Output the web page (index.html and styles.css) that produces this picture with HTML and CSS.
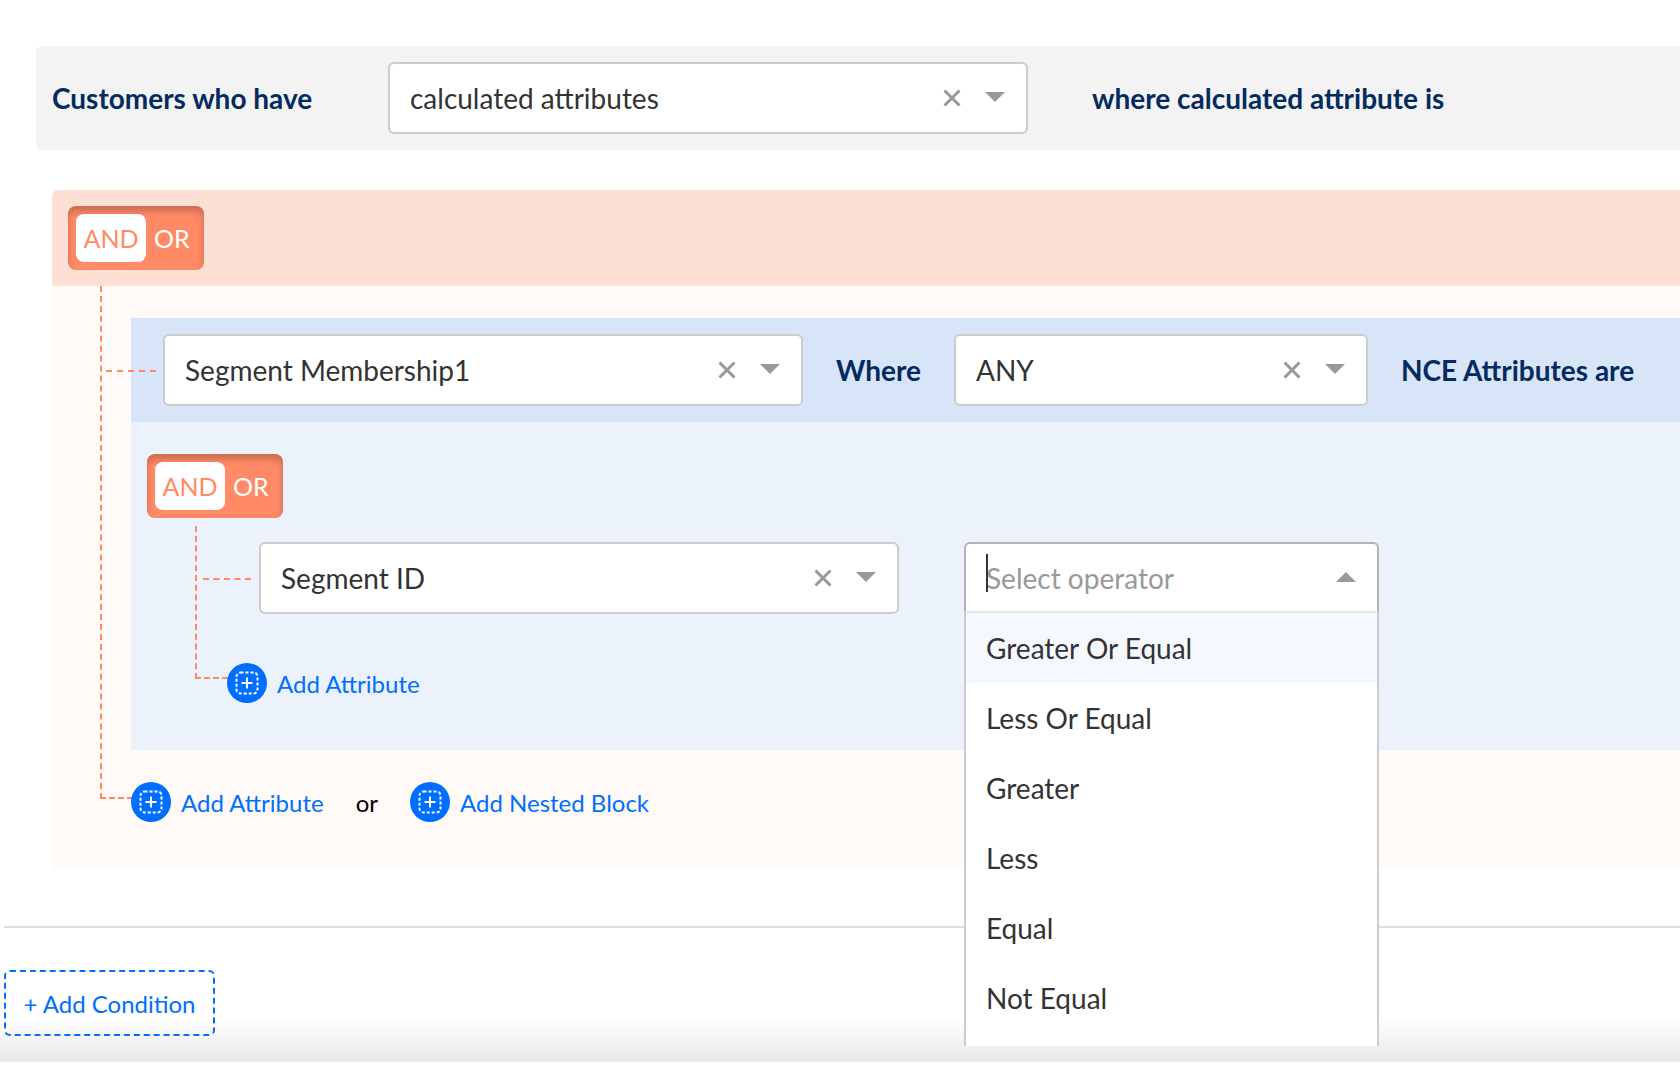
FILE: index.html
```html
<!DOCTYPE html>
<html lang="en">
<head>
	<meta charset="UTF-8">
	<title>Add Condition</title>
	<link rel="stylesheet" href="styles.css">
</head>
<body>
<div class="page">
	<div class="rulebar">
		<span class="label lead">Customers who have</span>
		<div class="select w640">
			<span class="value">calculated attributes</span>
			<svg class="clear" viewBox="0 0 18 18"><path d="M1.5 1.5L16.5 16.5M16.5 1.5L1.5 16.5"/></svg>
			<i class="caret"></i>
		</div>
		<span class="label after">where calculated attribute is</span>
	</div>

	<div class="block">
		<div class="block-head">
			<div class="toggle"><span class="on">AND</span><span class="off">OR</span></div>
		</div>
		<div class="block-body">
			<div class="line outer-line"></div>
			<div class="line outer-branch"></div>
			<div class="group-head">
				<div class="select w640">
					<span class="value">Segment Membership1</span>
					<svg class="clear" viewBox="0 0 18 18"><path d="M1.5 1.5L16.5 16.5M16.5 1.5L1.5 16.5"/></svg>
					<i class="caret"></i>
				</div>
				<span class="label where">Where</span>
				<div class="select w414">
					<span class="value">ANY</span>
					<svg class="clear" viewBox="0 0 18 18"><path d="M1.5 1.5L16.5 16.5M16.5 1.5L1.5 16.5"/></svg>
					<i class="caret"></i>
				</div>
				<span class="label after-any">NCE Attributes are</span>
			</div>
			<div class="group-body">
				<div class="line inner-line"></div>
				<div class="line inner-branch"></div>
				<div class="toggle"><span class="on">AND</span><span class="off">OR</span></div>
				<div class="attr-row">
					<div class="select w640">
						<span class="value">Segment ID</span>
						<svg class="clear" viewBox="0 0 18 18"><path d="M1.5 1.5L16.5 16.5M16.5 1.5L1.5 16.5"/></svg>
						<i class="caret"></i>
					</div>
					<div class="operator">
						<div class="select open">
							<span class="cursor"></span>
							<span class="value holder">Select operator</span>
							<i class="caret up"></i>
						</div>
						<ul class="menu">
							<li class="active">Greater Or Equal</li>
							<li>Less Or Equal</li>
							<li>Greater</li>
							<li>Less</li>
							<li>Equal</li>
							<li>Not Equal</li>
						</ul>
					</div>
				</div>
				<div class="add-row inner-add">
					<a class="add">
						<svg class="plus" viewBox="0 0 40 40"><circle cx="20" cy="20" r="20"/><rect x="9.5" y="9.5" width="21" height="21" rx="4"/><path d="M20 14.5V25.5M14.5 20H25.5"/></svg>
						Add Attribute
					</a>
				</div>
			</div>
			<div class="add-row">
				<a class="add">
					<svg class="plus" viewBox="0 0 40 40"><circle cx="20" cy="20" r="20"/><rect x="9.5" y="9.5" width="21" height="21" rx="4"/><path d="M20 14.5V25.5M14.5 20H25.5"/></svg>
					Add Attribute
				</a>
				<span class="or">or</span>
				<a class="add">
					<svg class="plus" viewBox="0 0 40 40"><circle cx="20" cy="20" r="20"/><rect x="9.5" y="9.5" width="21" height="21" rx="4"/><path d="M20 14.5V25.5M14.5 20H25.5"/></svg>
					Add Nested Block
				</a>
			</div>
		</div>
	</div>

	<div class="footer">
		<button class="add-condition">+ Add Condition</button>
	</div>
</div>
</body>
</html>
```

FILE: styles.css
```css
body,ul,li{margin:0;padding:0;list-style:none;}
body{
	font-family:"Lato","Noto Sans",sans-serif;
	background:#fff;
	overflow:hidden;
}
.page{
	width:1680px;
	height:1084px;
	overflow:hidden;
	padding-top:46px;
	box-sizing:border-box;
}
.rulebar{
	display:flex;
	align-items:center;
	flex-shrink:0;
	width:1644px;
	height:104px;
	margin-left:36px;
	padding-left:16px;
	box-sizing:border-box;
	background:#f3f3f3;
	border-radius:6px 0 0 6px;
}
.label{
	font-size:28px;
	font-weight:700;
	color:#032b5f;
	white-space:nowrap;
}
.lead{width:336px;}
.after{margin-left:64px;}
.where{margin:0 33px;}
.after-any{margin-left:33px;}

/* select */
.select{
	display:flex;
	align-items:center;
	height:72px;
	flex-shrink:0;
	padding:0 21px 0 20px;
	box-sizing:border-box;
	background:#fff;
	border:2px solid #ccc;
	border-radius:6px;
	font-size:28px;
	color:#333;
}
.w640{width:640px;}
.w414{width:414px;}
.value{flex:1;}
.holder{color:#999;}
.clear{
	width:18px;
	height:18px;
	margin-right:24px;
	fill:none;
	stroke:#999;
	stroke-width:3;
}
.caret{
	width:0;
	height:0;
	margin-bottom:2px;
	border-left:10px solid transparent;
	border-right:10px solid transparent;
	border-top:10px solid #999;
}
.caret.up{
	border-top:0;
	border-bottom:10px solid #999;
}

/* block */
.block{margin:40px 0 0 52px;}
.block-head{
	height:96px;
	padding:16px;
	box-sizing:border-box;
	background:#fddfd5;
	border-radius:6px 0 0 0;
}
.block-body{
	position:relative;
	height:583px;
	padding:32px 0 0 79px;
	box-sizing:border-box;
	background:#fffaf7;
}
.toggle{
	display:flex;
	align-items:center;
	width:136px;
	height:64px;
	padding:8px;
	box-sizing:border-box;
	background:#ff8a65;
	border-radius:8px;
	box-shadow:inset 0 5px 7px rgba(0,0,0,.22);
	font-size:25px;
	color:#fff;
}
.on{
	width:70px;
	height:48px;
	line-height:48px;
	text-align:center;
	background:#fff;
	border-radius:8px;
	color:#ff8a65;
}
.off{margin-left:8px;}

.group-head{
	display:flex;
	align-items:center;
	height:104px;
	padding-left:32px;
	background:#d8e4f7;
}
.group-body{
	position:relative;
	height:328px;
	padding:32px 0 0 16px;
	box-sizing:border-box;
	background:#ebf2fc;
}
.attr-row{
	display:flex;
	margin:24px 0 0 112px;
}
.operator{
	position:relative;
	width:415px;
	margin-left:65px;
}
.open{
	position:relative;
	width:415px;
	height:71px;
	border-color:#b3b3b3;
	border-bottom-color:#e6e6e6;
	border-radius:6px 6px 0 0;
}
.cursor{
	position:absolute;
	left:20px;
	top:10px;
	width:2px;
	height:38px;
	background:#333;
}
.menu{
	position:absolute;
	z-index:5;
	top:71px;
	left:0;
	width:415px;
	height:433px;
	overflow:hidden;
	box-sizing:border-box;
	background:#fff;
	border:2px solid #ccc;
	border-width:0 2px;
}
.menu li{
	height:70px;
	line-height:70px;
	padding-left:20px;
	font-size:28px;
	color:#333;
}
.menu .active{background:#f5f9ff;}

.add-row{
	display:flex;
	align-items:center;
	margin-top:32px;
	font-size:24px;
	color:#006eff;
}
.inner-add{margin:49px 0 0 80px;}
.add{
	display:flex;
	align-items:center;
	gap:10px;
}
.plus{
	position:relative;
	z-index:2;
	width:40px;
	height:40px;
	flex-shrink:0;
}
.plus circle{fill:#006eff;}
.plus rect{
	fill:none;
	stroke:#fff;
	stroke-width:2;
	stroke-dasharray:3 2;
}
.plus path{
	fill:none;
	stroke:#fff;
	stroke-width:2;
}
.or{
	margin:0 32px;
	color:#000;
}

/* dashed connectors */
.line{
	position:absolute;
	z-index:1;
	border:0 dashed #ff8a65;
}
.outer-line{
	left:48px;
	top:0;
	width:31px;
	height:511px;
	border-width:0 0 2px 2px;
}
.outer-branch{
	left:54px;
	top:84px;
	width:50px;
	border-top-width:2px;
}
.inner-line{
	left:64px;
	top:104px;
	width:31px;
	height:151px;
	border-width:0 0 2px 2px;
}
.inner-branch{
	left:72px;
	top:156px;
	width:48px;
	border-top-width:2px;
}

.footer{
	height:136px;
	margin-top:57px;
	padding-top:44px;
	box-sizing:border-box;
	background:linear-gradient(to bottom,#fff 67%,#e8e8e8 100%);
	position:relative;
}
.footer:before{
	content:"";
	position:absolute;
	left:4px;
	right:0;
	top:0;
	height:2px;
	background:#dde1e4;
}
.add-condition{
	display:block;
	width:211px;
	height:66px;
	margin-left:4px;
	background:none;
	border:2px dashed #006eff;
	border-radius:6px;
	font-family:inherit;
	font-size:24px;
	color:#006eff;
}
```
